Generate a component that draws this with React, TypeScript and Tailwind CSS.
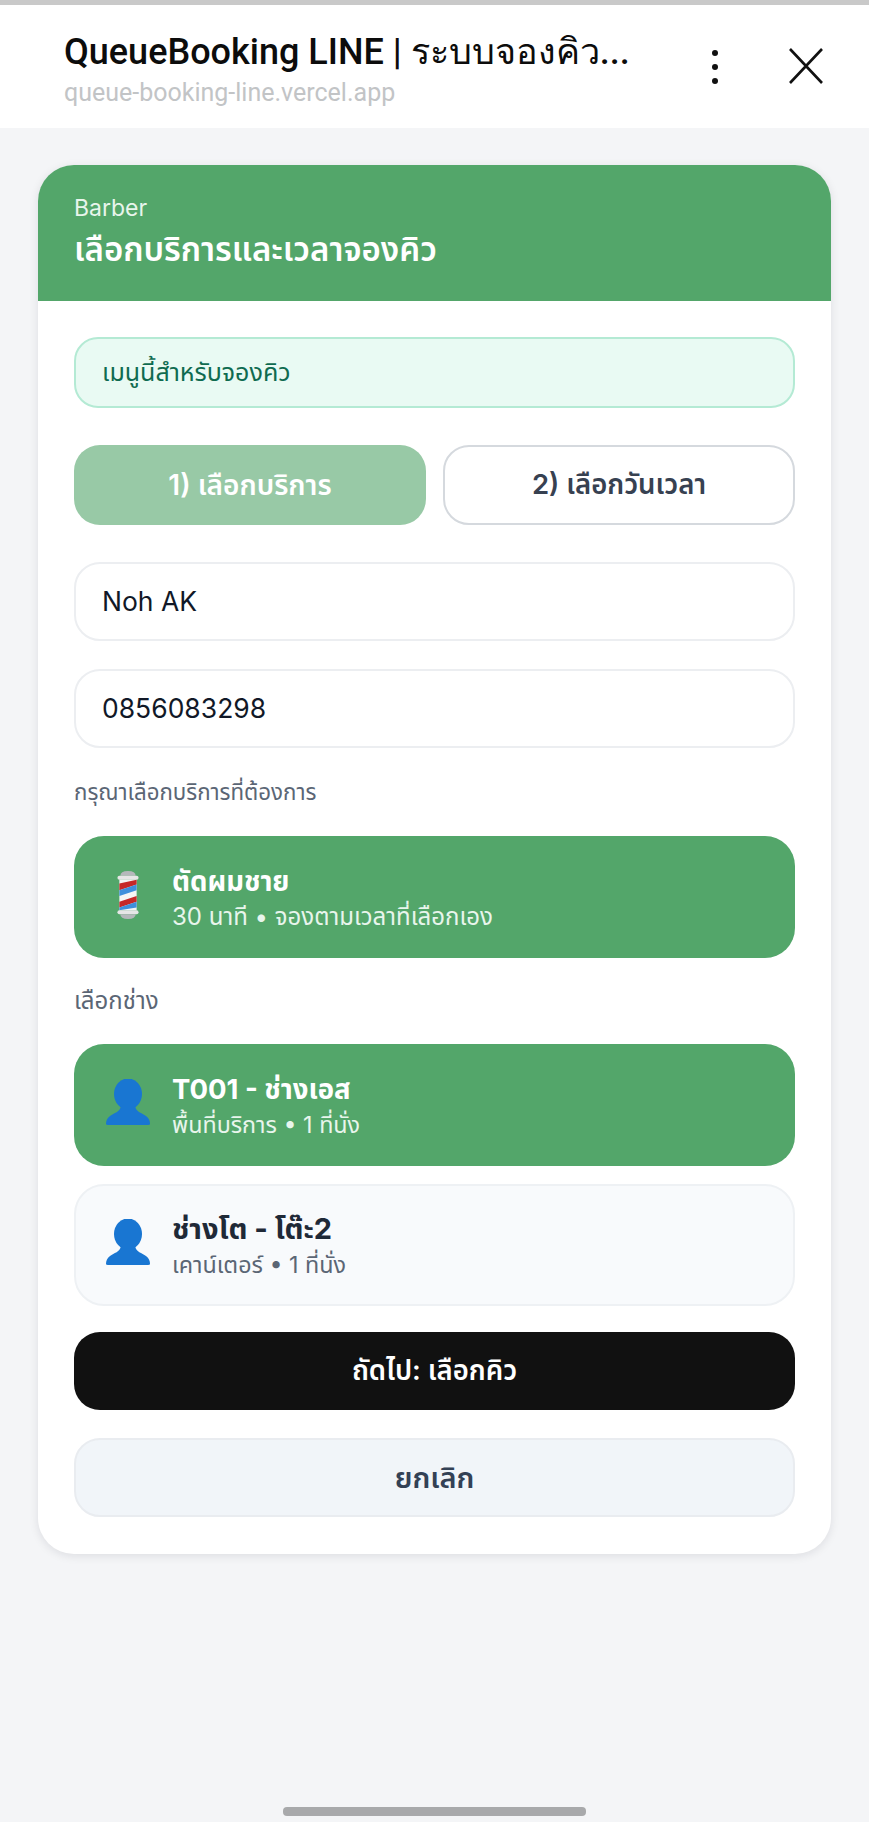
const font = "font-['Inter','Noto_Sans','Noto_Sans_Thai',sans-serif]"

const BarberPole = () => (
    <svg className="mb-[4px]" width="26" height="48" viewBox="0 0 26 50">
        <path d="M5 5 Q5 0 13 0 Q21 0 21 5 Z" fill="#b5b8bb" />
        <rect x="2" y="5" width="22" height="4" rx="2" fill="#e6e6e6" />
        <rect x="4" y="9" width="18" height="32" fill="#f5f5f5" />
        <path d="M4 13 L22 9 L22 14 L4 20 Z" fill="#c62828" />
        <path d="M4 20 L22 14 L22 20 L4 26 Z" fill="#3f8fdc" />
        <path d="M4 32 L22 26 L22 32 L4 38 Z" fill="#c62828" />
        <path d="M4 38 L22 32 L22 38 L4 41 Z" fill="#3f8fdc" />
        <rect x="2" y="41" width="22" height="4" rx="2" fill="#e6e6e6" />
        <path d="M5 45 Q5 50 13 50 Q21 50 21 45 Z" fill="#b5b8bb" />
    </svg>
)

const Person = () => (
    <svg className="mb-[6px]" width="44" height="46" viewBox="0 0 44 46">
        <ellipse cx="22" cy="15" rx="14" ry="15.5" fill="#1976d2" />
        <path d="M15 27 L29 27 C30 33 36 34 40 37 C43 39 44 42 44 45 Q44 46 42 46 L2 46 Q0 46 0 45 C0 42 1 39 4 37 C8 34 14 33 15 27 Z" fill="#1976d2" />
    </svg>
)

const Option = ({ icon, title, sub, active, small }: { icon: React.ReactNode; title: string; sub: string; active: boolean; small?: boolean }) => (
    <div className={`flex h-[122px] items-center rounded-[30px] ${active ? "bg-[#53a66a] pl-[28px] text-white" : "border-2 border-[#eef1f4] bg-[#f8fafc] pl-[26px] text-[#1f2937]"}`}>
        <div className="flex w-[52px] justify-center">{icon}</div>
        <div className="ml-[18px]">
            <div className={`font-bold leading-[40px] ${active ? "text-[27.5px]" : "text-[29px]"}`}>{title}</div>
            <div className={`leading-[32px] ${small ? "text-[23.3px]" : "text-[24px]"} ${active ? "text-[#e8f5ec]" : "text-[#5b6675]"}`}>{sub}</div>
        </div>
    </div>
)

export default function App() {
    return (
        <div className={`flex h-[1822px] flex-col overflow-hidden bg-[#f4f5f7] ${font}`}>
            <div className="h-[5px] bg-[#c9c9c9]" />
            <div className="flex h-[123px] items-start bg-white pl-[64px]">
                <div className="w-[590px] pt-[25px]">
                    <div className="font-['Roboto',sans-serif] text-[36px] font-medium leading-[44px] text-[#0c0c0c]">QueueBooking LINE | ระบบจองคิว...</div>
                    <div className="mt-[4px] font-['Roboto',sans-serif] text-[25px] leading-[30px] text-[#c2c4c6]">queue-booking-line.vercel.app</div>
                </div>
                <svg className="ml-[55px] mt-[44px]" width="12" height="36" viewBox="0 0 12 36" fill="#111">
                    <circle cx="6" cy="4" r="3" /><circle cx="6" cy="18" r="3" /><circle cx="6" cy="32" r="3" />
                </svg>
                <svg className="ml-[67px] mt-[43px]" width="36" height="36" viewBox="0 0 36 36" stroke="#111" strokeWidth="2.6">
                    <path d="M2 1 L34 35 M34 1 L2 35" />
                </svg>
            </div>

            <main className="px-[38px] pt-[37px]">
                <div className="overflow-hidden rounded-[36px] bg-white shadow-[0_2px_10px_rgba(15,23,42,0.1)]">
                    <div className="h-[136px] bg-[#53a66a] pl-[36px] pt-[28px] text-white">
                        <div className="text-[23px] leading-[30px] text-[#e8f5ec]">Barber</div>
                        <div className="mt-[6px] text-[33px] font-semibold leading-[40px]">เลือกบริการและเวลาจองคิว</div>
                    </div>

                    <div className="px-[36px] pb-[37px] pt-[36px]">
                        <div className="flex h-[71px] items-center rounded-[24px] border-2 border-[#b4ead4] bg-[#e9faf3] pl-[26px] text-[25px] text-[#0f6b50]">เมนูนี้สำหรับจองคิว</div>

                        <div className="mt-[37px] grid grid-cols-2 gap-[17px]">
                            <div className="flex h-[80px] items-center justify-center rounded-[26px] bg-[#98c9a6] text-[28px] font-semibold text-white">1) เลือกบริการ</div>
                            <div className="flex h-[80px] items-center justify-center rounded-[26px] border-2 border-[#d5d9de] bg-white text-[27.5px] font-semibold text-[#374151]">2) เลือกวันเวลา</div>
                        </div>

                        <div className="mt-[37px] flex h-[79px] items-center rounded-[26px] border-2 border-[#eceef1] pl-[26px] text-[26.5px] text-[#111827]">Noh AK</div>
                        <div className="mt-[28px] flex h-[79px] items-center rounded-[26px] border-2 border-[#eceef1] pl-[26px] text-[26.5px] text-[#111827]">0856083298</div>

                        <div className="mt-[28px] text-[22.3px] leading-[32px] text-[#5b6675]">กรุณาเลือกบริการที่ต้องการ</div>

                        <div className="mt-[28px]">
                            <Option active icon={<BarberPole />} title="ตัดผมชาย" sub="30 นาที • จองตามเวลาที่เลือกเอง" />
                        </div>

                        <div className="mt-[27px] text-[24px] leading-[32px] text-[#5b6675]">เลือกช่าง</div>

                        <div className="mt-[27px] flex flex-col gap-[18px]">
                            <Option active small icon={<Person />} title="T001 - ช่างเอส" sub="พื้นที่บริการ • 1 ที่นั่ง" />
                            <Option active={false} small icon={<Person />} title="ช่างโต - โต๊ะ2" sub="เคาน์เตอร์ • 1 ที่นั่ง" />
                        </div>

                        <div className="mt-[26px] flex h-[78px] items-center justify-center rounded-[26px] bg-[#111111] text-[27.5px] font-semibold text-white">ถัดไป: เลือกคิว</div>
                        <div className="mt-[28px] flex h-[79px] items-center justify-center rounded-[26px] border-2 border-[#e9ecf0] bg-[#f1f5f9] text-[29px] font-semibold text-[#334155]">ยกเลิก</div>
                    </div>
                </div>
            </main>

            <div className="mt-auto mb-[6px] flex justify-center">
                <div className="h-[9px] w-[303px] rounded-[4px] bg-[#a8a9ab]" />
            </div>
        </div>
    )
}
